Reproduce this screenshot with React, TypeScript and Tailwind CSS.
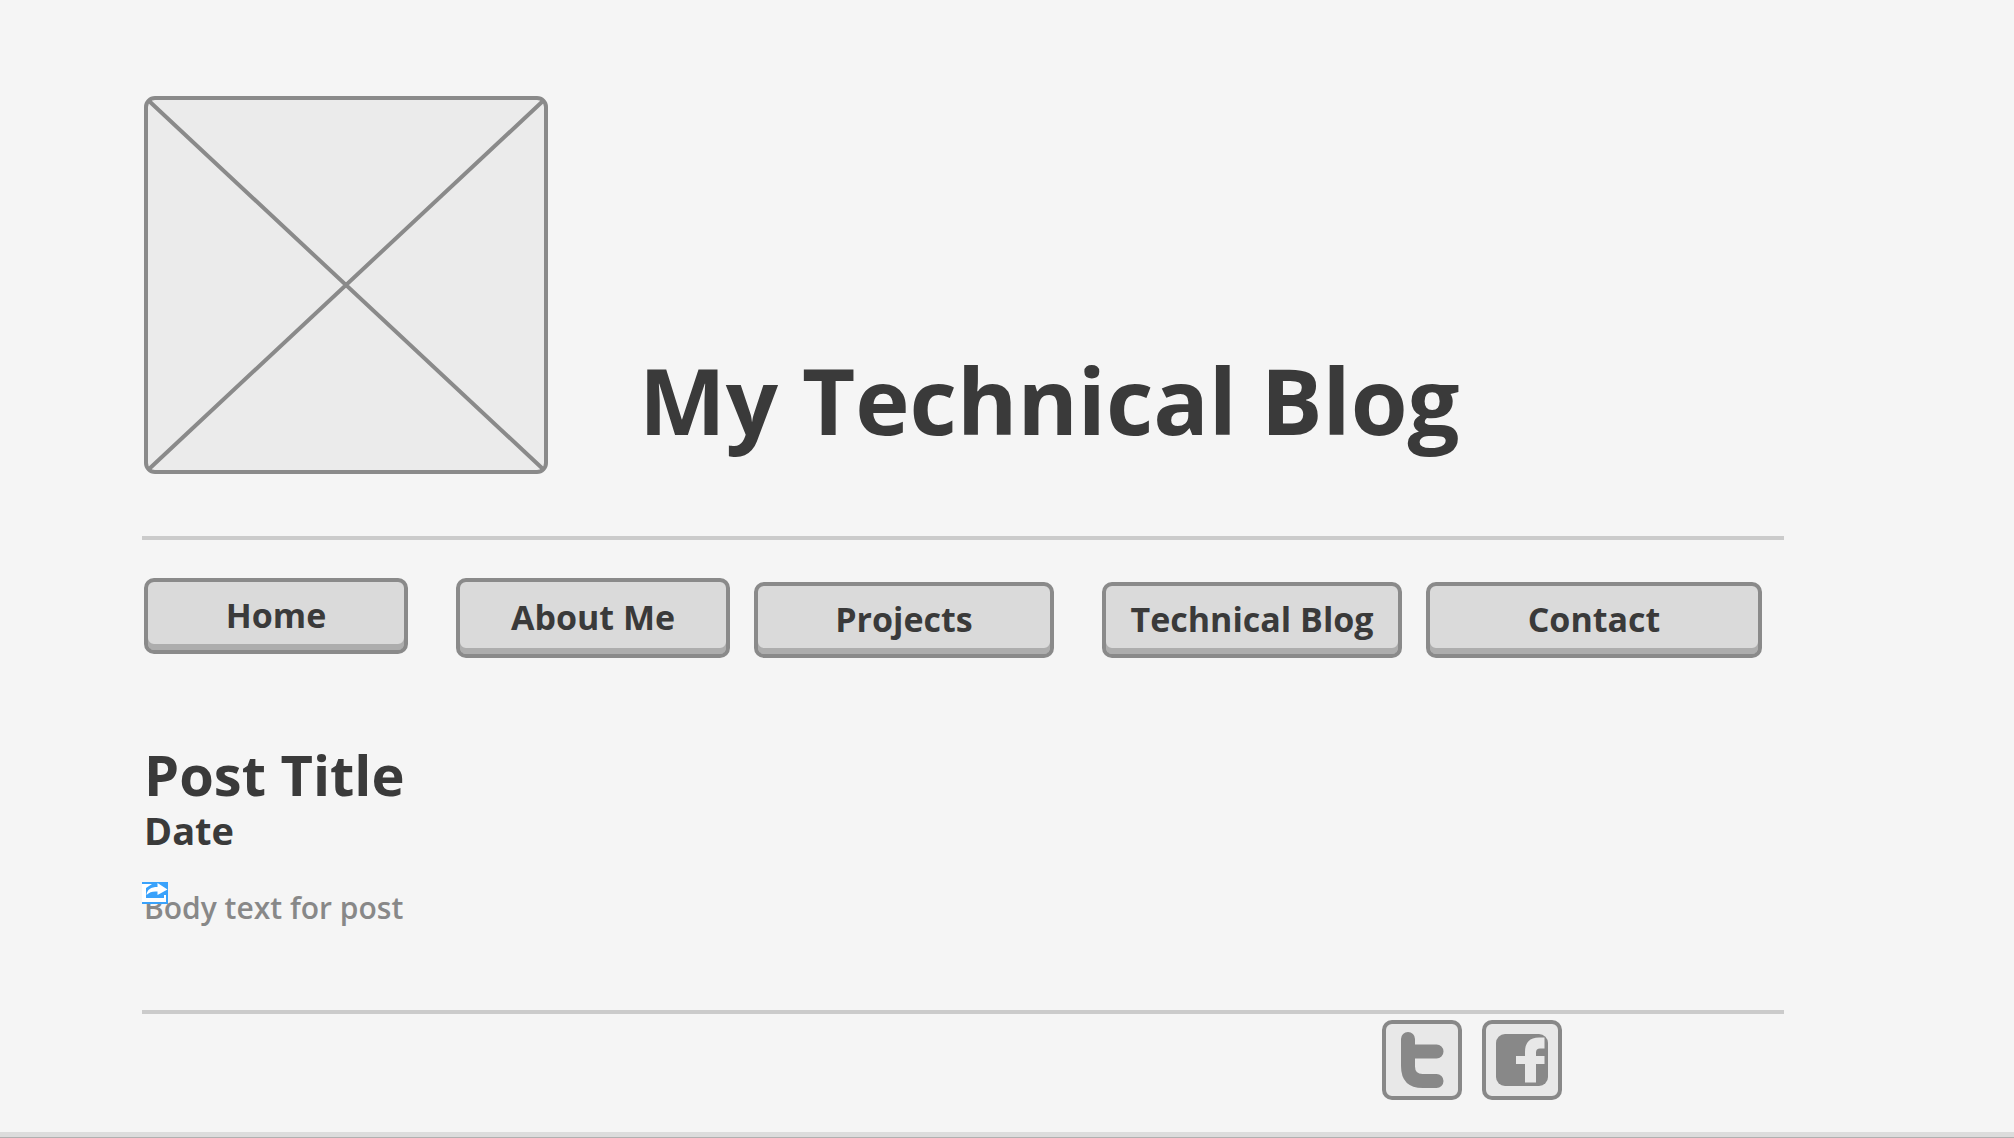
import React from "react";

const navItems = [
  { label: "Home", size: "h-19 self-start mr-6" },
  { label: "About Me", size: "h-20" },
  { label: "Projects", size: "h-19 mr-6" },
  { label: "Technical Blog", size: "h-19" },
  { label: "Contact", size: "h-19" },
];

function PicturePlaceholder() {
  return (
    <svg
      role="img"
      aria-label="Image placeholder"
      viewBox="0 0 404 378"
      className="ml-0.5 h-[378px] w-[404px] shrink-0"
      fill="none"
      stroke="#8a8a8a"
      strokeWidth="4"
    >
      <rect x="2" y="2" width="400" height="374" rx="9" fill="#ebebeb" />
      <path d="M4.500 4.500 399.500 373.500M399.500 4.500 4.500 373.500" />
    </svg>
  );
}

function Rule() {
  return <hr className="h-1 border-0 bg-[#cbcbcb]" />;
}

function EmbedBadge() {
  return (
    <svg viewBox="0 0 26 22" className="absolute -top-1.5 -left-0.5 h-[22px] w-[26px]" aria-hidden="true">
      <rect width="26" height="22" fill="#3aa2fb" />
      <path d="M0 2H10L4 6V16H22V13H24V20H0Z" fill="#fff" />
      <path d="M4.500 13C5 7.500 9 5 15.500 5V1L25.500 7.500 15.500 13V9.500C11 9 7.500 10 4.500 13Z" fill="#fff" />
    </svg>
  );
}

function TwitterIcon() {
  return (
    <svg viewBox="0 0 72 72" className="size-18" aria-hidden="true" fill="#888888">
      <path d="M15 15a7 7 0 0 1 14 0v5.500H50.500a7 7 0 0 1 0 14H29V42.500q0 7.500 7.500 7.500H50.500a7 7 0 0 1 0 14H37Q15 64 15 42Z" />
    </svg>
  );
}

function FacebookIcon() {
  return (
    <svg viewBox="0 0 72 72" className="size-18" aria-hidden="true">
      <rect x="10" y="10" width="52" height="52" rx="9" fill="#888888" />
      <path
        d="M58.500 13.500V24.500H54Q50 24.500 50 28.500V32H58.500V40H50V58.500H39V40H30V32H39V28Q39 13.500 53 13.500Z"
        fill="#e8e8e8"
      />
    </svg>
  );
}

export default function App() {
  return (
    <div className="flex min-h-screen flex-col bg-[#f5f5f5] font-['Open_Sans',sans-serif] text-[#3a3a3a]">
      <div className="pt-24 pr-[230px] pl-[142px]">
        <header className="flex items-end gap-[91px]">
          <PicturePlaceholder />
          <h1 className="pb-[26px] text-[92px] leading-24 font-bold whitespace-nowrap">My Technical Blog</h1>
        </header>

        <div className="pt-[62px] pb-[38px]">
          <Rule />
        </div>

        <nav className="grid grid-cols-[288fr_274fr_324fr_300fr_336fr] items-end gap-6 pr-[22px] pl-0.5">
          {navItems.map((item) => (
            <button
              key={item.label}
              type="button"
              className={`${item.size} rounded-[10px] border-4 border-[#8a8a8a] bg-[#dadada] pb-0.5 text-[34px] leading-10 font-bold whitespace-nowrap shadow-[inset_0_-6px_0_#adadad]`}
            >
              {item.label}
            </button>
          ))}
        </nav>

        <article className="pt-21 pb-[82px] pl-0.5">
          <h2 className="text-[56px] leading-16 font-bold">Post Title</h2>
          <p className="text-[38px] leading-12 font-bold">Date</p>
          <div className="relative mt-[34px]">
            <p className="text-[30px] leading-10 font-semibold text-[#888888]">Body text for post</p>
            <EmbedBadge />
          </div>
        </article>

        <Rule />
        <footer className="flex justify-end gap-5 pt-1.5 pr-[222px]">
          <a href="#twitter" aria-label="Twitter" className="size-20 rounded-[10px] border-4 border-[#888888] bg-[#e8e8e8]">
            <TwitterIcon />
          </a>
          <a href="#facebook" aria-label="Facebook" className="size-20 rounded-[10px] border-4 border-[#888888] bg-[#e8e8e8]">
            <FacebookIcon />
          </a>
        </footer>
      </div>
      <div className="mt-auto h-1.5 border-b border-[#b0b0b0] bg-[#dcdcdc]" />
    </div>
  );
}
